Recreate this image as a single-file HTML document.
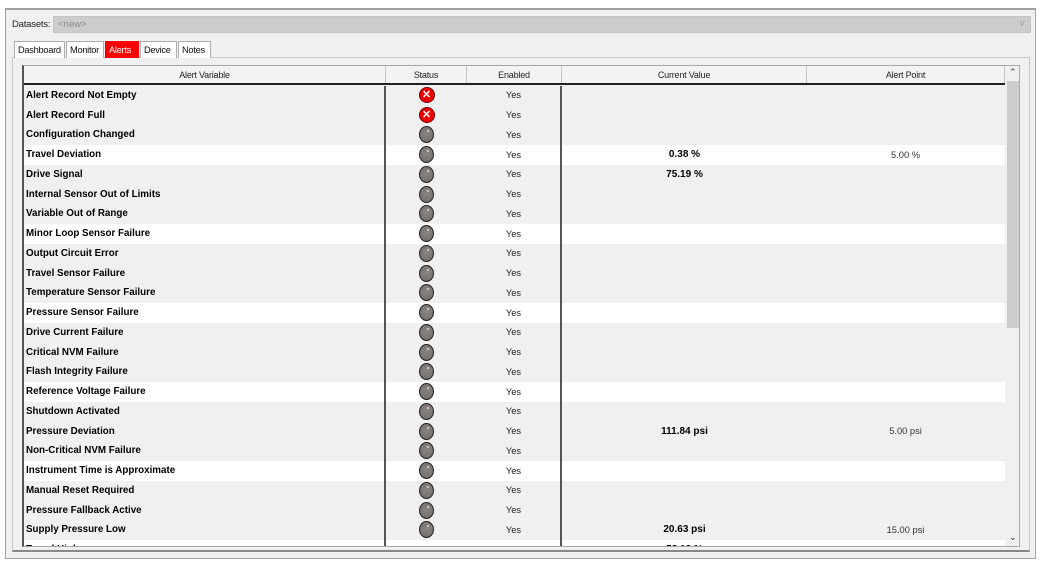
<!DOCTYPE html>
<html><head><meta charset="utf-8"><style>
*{box-sizing:border-box;margin:0;padding:0}
body{width:1040px;height:566px;background:#fff;font-family:"Liberation Sans",Arial,sans-serif;font-size:10px;color:#000;position:relative;overflow:hidden}
.frame{position:absolute;left:5px;top:8px;width:1031px;height:551px;background:#f0f0f0;border:1px solid #a0a0a0;border-top:2px solid #a0a0a0}
.abs{position:absolute}
.lbl{left:12px;top:19px;font-size:9.5px;color:#222;letter-spacing:-0.2px}
.combo{left:53px;top:16px;width:978px;height:17px;background:#cccccc;border:1px solid #c4c4c4;color:#8a8a8a;font-size:9.5px;padding:2px 0 0 4px}
.chev{right:4px;top:1px;color:#a8a8a8;font-size:10px}
.tab{top:41px;height:17px;background:#fff;border:1px solid #adadad;border-bottom:none;font-size:9.3px;letter-spacing:-0.3px;padding:3px 0 0 3px;color:#111;white-space:nowrap;overflow:hidden}
.panel{left:12px;top:57px;width:1018px;height:495px;border:1px solid #c8c8c8;border-bottom:2px solid #888;background:#f0f0f0}
.grid{left:22px;top:65px;width:998px;height:482px;border:1px solid #a8a8a8;border-left:2px solid #555;background:#f0f0f0;overflow:hidden}
.hdr{position:absolute;left:0;top:0;width:981px;height:19px;border-bottom:2px solid #222;background:#f3f3f3;display:flex}
.hdr div{border-right:1px solid #c4c4c4;text-align:center;font-size:9px;letter-spacing:-0.2px;padding-top:4px;color:#222}
.rows{position:absolute;left:0;top:19.5px;width:981px}
.r{height:19.75px;display:flex;align-items:center;background:#f0f0f0}
.r.w{background:#fff}
.r>div{height:100%;display:flex;align-items:center}
.c1{width:362px;font-weight:bold;font-size:9.8px;padding-left:2px;border-right:2px solid #555}
.c2{width:81px;justify-content:center}
.c3{width:95px;justify-content:center;font-size:9.3px;color:#222;border-right:2px solid #555}
.c4{width:245px;justify-content:center;font-weight:bold;font-size:10px}
.c5{width:197px;justify-content:center;font-size:9.3px;color:#333}
.g{width:15px;height:17px;border-radius:50%;background:radial-gradient(circle at 55% 40%,#8a8582,#6e6a67);border:1.5px solid #222;position:relative}
.g:after{content:"";position:absolute;left:7px;top:3px;width:2px;height:2px;background:#ddd;border-radius:50%}
.x{width:16px;height:16px;border-radius:50%;background:#e00;border:1px solid #700;color:#fff;font-weight:bold;font-size:11px;display:flex;align-items:center;justify-content:center;line-height:1}
.sb{left:981px;top:0;width:15px;height:480px;background:#f0f0f0}
.thumb{left:2px;top:15px;width:12px;height:247px;background:#cdcdcd}
</style></head><body>
<div class="frame"></div>
<div class="abs lbl">Datasets:</div>
<div class="abs combo">&lt;new&gt;<span class="abs chev">&#8744;</span></div>
<div class="abs panel"></div>
<div class="abs tab" style="left:14px;width:51px">Dashboard</div>
<div class="abs tab" style="left:66px;width:38px">Monitor</div>
<div class="abs tab" style="left:105px;width:34px;background:#f00;color:#fff;border-color:#f00">Alerts</div>
<div class="abs tab" style="left:140px;width:37px">Device</div>
<div class="abs tab" style="left:178px;width:33px">Notes</div>
<div class="abs grid">
<div class="hdr"><div style="width:362px">Alert Variable</div><div style="width:81px">Status</div><div style="width:95px">Enabled</div><div style="width:245px">Current Value</div><div style="width:198px">Alert Point</div></div>
<div class="rows">
<div class="r"><div class="c1">Alert Record Not Empty</div><div class="c2"><span class="x">✕</span></div><div class="c3">Yes</div><div class="c4"></div><div class="c5"></div></div>
<div class="r"><div class="c1">Alert Record Full</div><div class="c2"><span class="x">✕</span></div><div class="c3">Yes</div><div class="c4"></div><div class="c5"></div></div>
<div class="r"><div class="c1">Configuration Changed</div><div class="c2"><span class="g"></span></div><div class="c3">Yes</div><div class="c4"></div><div class="c5"></div></div>
<div class="r w"><div class="c1">Travel Deviation</div><div class="c2"><span class="g"></span></div><div class="c3">Yes</div><div class="c4">0.38 %</div><div class="c5">5.00 %</div></div>
<div class="r"><div class="c1">Drive Signal</div><div class="c2"><span class="g"></span></div><div class="c3">Yes</div><div class="c4">75.19 %</div><div class="c5"></div></div>
<div class="r"><div class="c1">Internal Sensor Out of Limits</div><div class="c2"><span class="g"></span></div><div class="c3">Yes</div><div class="c4"></div><div class="c5"></div></div>
<div class="r"><div class="c1">Variable Out of Range</div><div class="c2"><span class="g"></span></div><div class="c3">Yes</div><div class="c4"></div><div class="c5"></div></div>
<div class="r w"><div class="c1">Minor Loop Sensor Failure</div><div class="c2"><span class="g"></span></div><div class="c3">Yes</div><div class="c4"></div><div class="c5"></div></div>
<div class="r"><div class="c1">Output Circuit Error</div><div class="c2"><span class="g"></span></div><div class="c3">Yes</div><div class="c4"></div><div class="c5"></div></div>
<div class="r"><div class="c1">Travel Sensor Failure</div><div class="c2"><span class="g"></span></div><div class="c3">Yes</div><div class="c4"></div><div class="c5"></div></div>
<div class="r"><div class="c1">Temperature Sensor Failure</div><div class="c2"><span class="g"></span></div><div class="c3">Yes</div><div class="c4"></div><div class="c5"></div></div>
<div class="r w"><div class="c1">Pressure Sensor Failure</div><div class="c2"><span class="g"></span></div><div class="c3">Yes</div><div class="c4"></div><div class="c5"></div></div>
<div class="r"><div class="c1">Drive Current Failure</div><div class="c2"><span class="g"></span></div><div class="c3">Yes</div><div class="c4"></div><div class="c5"></div></div>
<div class="r"><div class="c1">Critical NVM Failure</div><div class="c2"><span class="g"></span></div><div class="c3">Yes</div><div class="c4"></div><div class="c5"></div></div>
<div class="r"><div class="c1">Flash Integrity Failure</div><div class="c2"><span class="g"></span></div><div class="c3">Yes</div><div class="c4"></div><div class="c5"></div></div>
<div class="r w"><div class="c1">Reference Voltage Failure</div><div class="c2"><span class="g"></span></div><div class="c3">Yes</div><div class="c4"></div><div class="c5"></div></div>
<div class="r"><div class="c1">Shutdown Activated</div><div class="c2"><span class="g"></span></div><div class="c3">Yes</div><div class="c4"></div><div class="c5"></div></div>
<div class="r"><div class="c1">Pressure Deviation</div><div class="c2"><span class="g"></span></div><div class="c3">Yes</div><div class="c4">111.84 psi</div><div class="c5">5.00 psi</div></div>
<div class="r"><div class="c1">Non-Critical NVM Failure</div><div class="c2"><span class="g"></span></div><div class="c3">Yes</div><div class="c4"></div><div class="c5"></div></div>
<div class="r w"><div class="c1">Instrument Time is Approximate</div><div class="c2"><span class="g"></span></div><div class="c3">Yes</div><div class="c4"></div><div class="c5"></div></div>
<div class="r"><div class="c1">Manual Reset Required</div><div class="c2"><span class="g"></span></div><div class="c3">Yes</div><div class="c4"></div><div class="c5"></div></div>
<div class="r"><div class="c1">Pressure Fallback Active</div><div class="c2"><span class="g"></span></div><div class="c3">Yes</div><div class="c4"></div><div class="c5"></div></div>
<div class="r"><div class="c1">Supply Pressure Low</div><div class="c2"><span class="g"></span></div><div class="c3">Yes</div><div class="c4">20.63 psi</div><div class="c5">15.00 psi</div></div>
<div class="r w"><div class="c1">Travel High</div><div class="c2"></div><div class="c3">No</div><div class="c4">58.12 %</div><div class="c5">125.00 %</div></div>
</div>
<div class="abs sb"><div class="abs" style="left:4px;top:1px;font-size:9px;color:#333">&#8963;</div><div class="abs thumb"></div><div class="abs" style="left:4px;top:466px;font-size:9px;color:#333">&#8964;</div></div>
</div>
</body></html>
